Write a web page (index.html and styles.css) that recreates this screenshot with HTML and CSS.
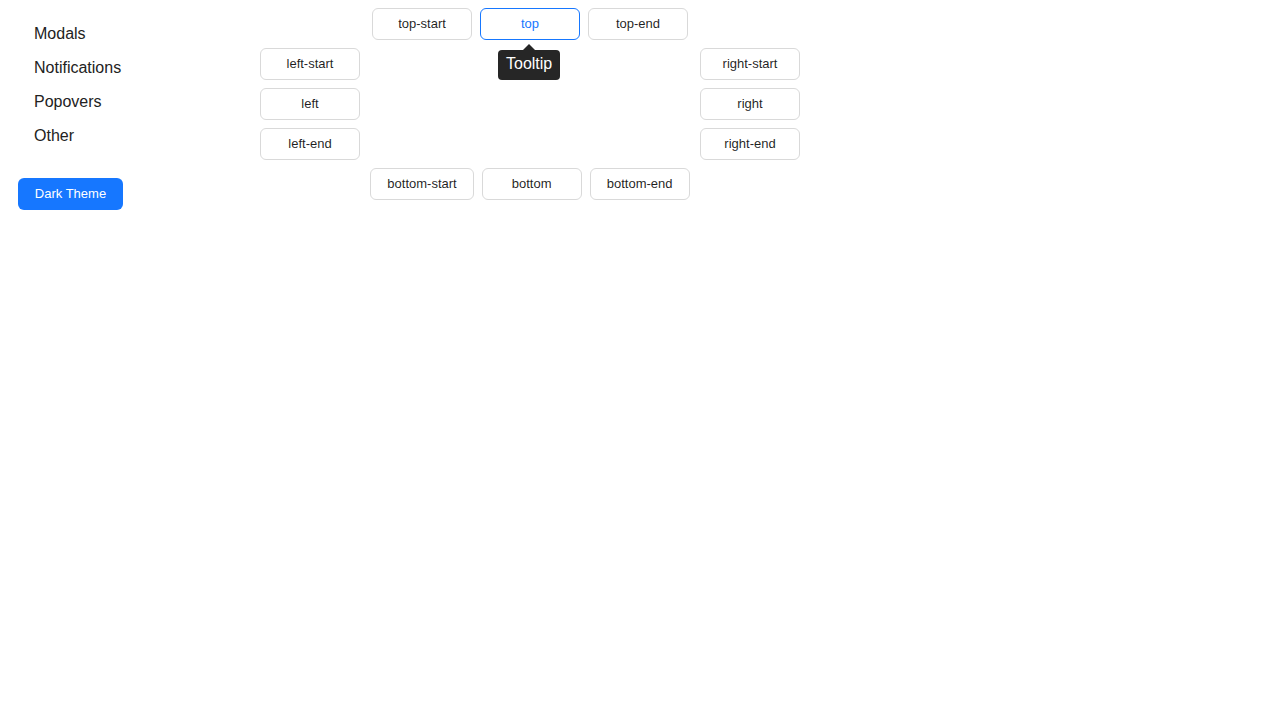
FILE: index.html
```html
<!DOCTYPE html>
<html>
<head>
<meta charset="utf-8">
<link rel="stylesheet" href="styles.css">
</head>
<body>
<div class="page">
  <aside class="sidebar">
    <ul class="nav">
      <li class="nav-item">Modals</li>
      <li class="nav-item">Notifications</li>
      <li class="nav-item">Popovers</li>
      <li class="nav-item">Other</li>
    </ul>
    <button class="theme-btn">Dark Theme</button>
  </aside>
  <main class="demo">
    <div class="row row-center">
      <button class="btn">top-start</button>
      <span class="anchor">
        <button class="btn btn-focus">top</button>
        <span class="tooltip">Tooltip</span>
      </span>
      <button class="btn">top-end</button>
    </div>
    <div class="sides">
      <div class="col">
        <button class="btn">left-start</button>
        <button class="btn">left</button>
        <button class="btn">left-end</button>
      </div>
      <div class="col">
        <button class="btn">right-start</button>
        <button class="btn">right</button>
        <button class="btn">right-end</button>
      </div>
    </div>
    <div class="row row-center">
      <button class="btn">bottom-start</button>
      <button class="btn">bottom</button>
      <button class="btn">bottom-end</button>
    </div>
  </main>
</div>
</body>
</html>
```
FILE: styles.css
```css
html, body {
  margin: 0;
  padding: 0;
  background: #fff;
  font-family: "Liberation Sans", Arial, sans-serif;
  color: rgba(0, 0, 0, 0.88);
}

.page {
  display: flex;
  align-items: flex-start;
}

.sidebar {
  width: 260px;
  box-sizing: border-box;
  padding: 17px 0 0 18px;
}

.nav {
  list-style: none;
  margin: 0;
  padding: 0;
}

.nav-item {
  padding-left: 16px;
  height: 34px;
  line-height: 34px;
  font-size: 16px;
  color: #222;
}

.theme-btn {
  margin-top: 25px;
  height: 32px;
  width: 105px;
  padding: 0 0 2px;
  border: none;
  border-radius: 6px;
  background: #1677ff;
  color: #fff;
  font-family: "Liberation Sans", Arial, sans-serif;
  font-size: 13px;
}

.demo {
  width: 540px;
  padding-top: 8px;
  display: flex;
  flex-direction: column;
  gap: 8px;
}

.row {
  display: flex;
  gap: 8px;
}

.row-center {
  justify-content: center;
}

.sides {
  display: flex;
  justify-content: space-between;
}

.col {
  display: flex;
  flex-direction: column;
  gap: 8px;
}

.btn {
  min-width: 100px;
  height: 32px;
  padding: 0 16px 2px;
  box-sizing: border-box;
  border: 1px solid #d9d9d9;
  border-radius: 6px;
  background: #fff;
  color: rgba(0, 0, 0, 0.88);
  font-family: "Liberation Sans", Arial, sans-serif;
  font-size: 13px;
  white-space: nowrap;
}

.btn-focus {
  border-color: #1677ff;
  color: #1677ff;
}

.anchor {
  position: relative;
  display: inline-flex;
}

.tooltip {
  position: absolute;
  top: 42px;
  left: 18px;
  height: 30px;
  line-height: 28px;
  padding: 0 8px 2px;
  box-sizing: border-box;
  background: #262626;
  color: #fff;
  font-size: 16px;
  border-radius: 4px;
  white-space: nowrap;
}

.tooltip::before {
  content: "";
  position: absolute;
  top: -6px;
  left: 50%;
  margin-left: -6px;
  border-left: 6px solid transparent;
  border-right: 6px solid transparent;
  border-bottom: 6px solid #262626;
}
```
